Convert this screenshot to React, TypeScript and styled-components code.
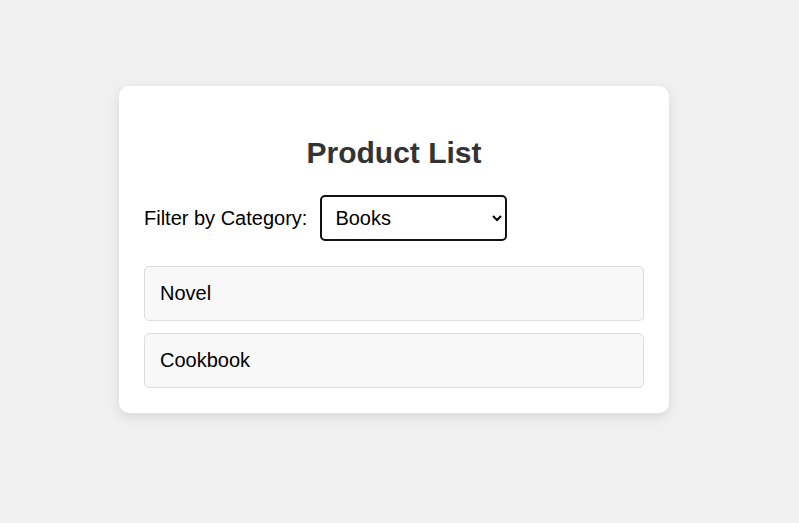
import React, { useState } from 'react';
import styled, { createGlobalStyle } from 'styled-components';

const GlobalStyle = createGlobalStyle`
  body {
    margin: 0;
    background-color: #f0f0f0;
    font-family: "Liberation Sans", Arial, sans-serif;
  }
`

const Page = styled.div`
  min-height: 100vh;
  box-sizing: border-box;
  padding: 86px 0 0 119px;
`

const Card = styled.div`
  width: 550px;
  box-sizing: border-box;
  padding: 25px;
  background-color: #fff;
  border-radius: 10px;
  box-shadow: 0 4px 12px rgba(0, 0, 0, 0.1);
`

const Title = styled.h2`
  margin: 25px 0;
  font-size: 30px;
  font-weight: bold;
  color: #333;
  text-align: center;
`

const FilterRow = styled.div`
  display: flex;
  align-items: center;
  gap: 13px;
  margin-bottom: 25px;
`

const Label = styled.label`
  font-size: 20px;
  color: #000;
`

const Select = styled.select`
  width: 187px;
  height: 46px;
  padding: 0 8px 0 9px;
  font-family: "Liberation Sans", Arial, sans-serif;
  font-size: 20px;
  color: #000;
  background-color: #fff;
  border: 2px solid #111;
  border-radius: 5px;
  outline: none;
`

const List = styled.ul`
  list-style: none;
  margin: 0;
  padding: 0;
  display: flex;
  flex-direction: column;
  gap: 12px;
`

const Item = styled.li`
  padding: 15px;
  font-size: 20px;
  color: #000;
  background-color: #f8f8f8;
  border: 1px solid #ddd;
  border-radius: 5px;
`

const products = [
  { name: 'Laptop', category: 'Electronics' },
  { name: 'Novel', category: 'Books' },
  { name: 'T-Shirt', category: 'Clothing' },
  { name: 'Cookbook', category: 'Books' },
]

export default function App () {
  const [category, setCategory] = useState('Books')
  const shown = products.filter(p => category === 'All' || p.category === category)

  return (
    <Page>
      <GlobalStyle />
      <Card>
        <Title>Product List</Title>
        <FilterRow>
          <Label htmlFor="category">Filter by Category:</Label>
          <Select id="category" value={ category } onChange={ e => setCategory(e.target.value) }>
            <option value="All">All</option>
            <option value="Electronics">Electronics</option>
            <option value="Books">Books</option>
            <option value="Clothing">Clothing</option>
          </Select>
        </FilterRow>
        <List>
          { shown.map(p => <Item key={ p.name }>{ p.name }</Item>) }
        </List>
      </Card>
    </Page>
  )
}
